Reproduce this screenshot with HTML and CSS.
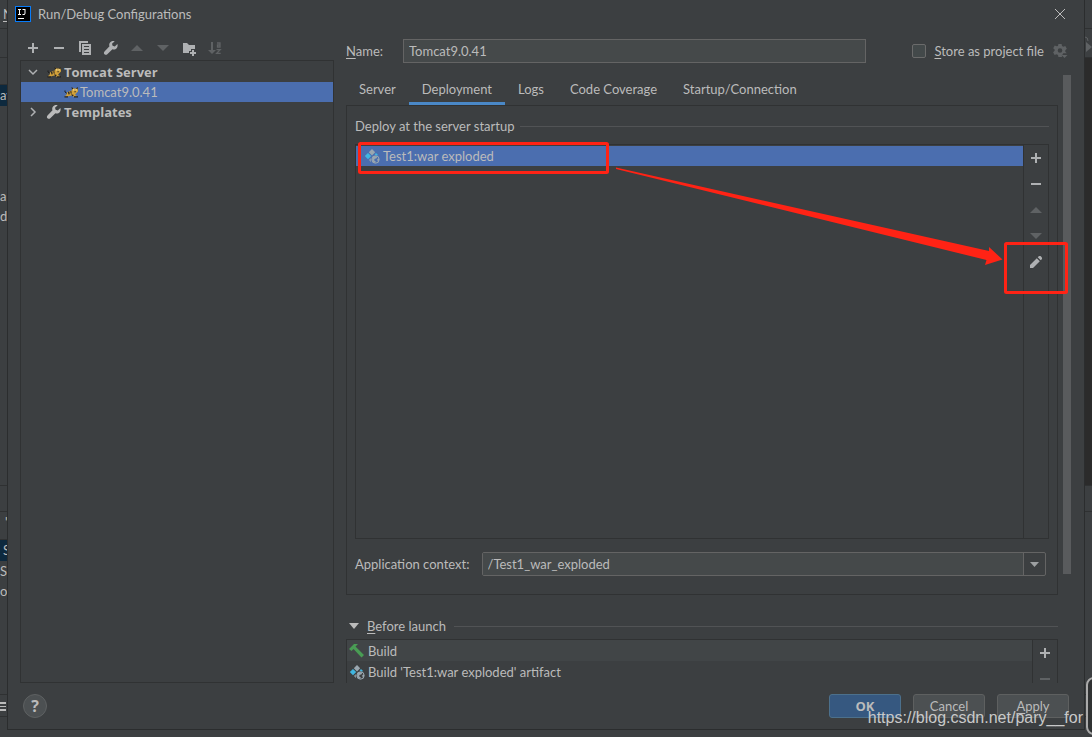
FILE: index.html
```html
<!DOCTYPE html>
<html lang="en">
<head>
<meta charset="utf-8">
<title>Run/Debug Configurations</title>
<link rel="stylesheet" href="styles.css">
</head>
<body>
<svg class="defs" aria-hidden="true">
  <symbol id="plus" viewBox="0 0 16 16"><path fill="currentColor" d="M7 3h2v4h4v2H9v4H7V9H3V7h4z"/></symbol>
  <symbol id="minus" viewBox="0 0 16 16"><path fill="currentColor" d="M3 7h10v2H3z"/></symbol>
  <symbol id="up" viewBox="0 0 16 16"><path fill="currentColor" d="M8 5l6 6H2z"/></symbol>
  <symbol id="down" viewBox="0 0 16 16"><path fill="currentColor" d="M2 5h12l-6 6z"/></symbol>
  <symbol id="wrench" viewBox="0 0 16 16"><path fill="currentColor" d="M14.400 4.100l-2.600 2.300-2.200-.6-.6-2.100 2.700-2.400C9.800.7 7.900 1.300 6.900 2.700c-.8 1.100-.9 2.400-.4 3.600l-5 5.100c-.8.800-.8 2 0 2.800s2 .8 2.800 0l5.100-5c1.500.6 3.200.2 4.300-1 .9-1.100 1.200-2.700.7-4.100z"/></symbol>
  <symbol id="artifact" viewBox="0 0 16 16">
    <path fill="#9aa7b0" d="M8 1l3.200 3.200L8 7.400 4.800 4.200z"/>
    <path fill="#40b6e0" d="M4 4.900l3.200 3.200L4 11.300.8 8.100zM12 5l2 2-1 .8-2.400-1.400z"/>
    <path fill="#9aa7b0" d="M7 10l-2 2 2.200 2.200c-.6-1.500-.6-2.800-.2-4.200z"/>
    <circle cx="11.500" cy="11.500" r="3.700" fill="none" stroke="#9aa7b0" stroke-width="1"/>
    <path fill="#9aa7b0" d="M8.500 9.500l2-1.500 3 .4-1 1.800-2 .7-.3 1.500 1.500.8-.3 1.700-1.900-.7-1.500-2zM13.200 11l1.800-.4v2l-1.300 1.200z"/>
  </symbol>
  <symbol id="tomcat" viewBox="0 0 16 16">
    <path fill="none" stroke="#1e1f20" stroke-width="1" d="M4 9.500L2 8V6.500"/>
    <path fill="#d2a13a" d="M4 8.500l3-1.500 2-.5V3.500l2 1h2l2-1v4l-2 2-1 1.500 2 1v1h-3l-2-1.500L6 12l-2 1H2v-1l1.500-1z"/>
    <path fill="#1e1f20" d="M8.500 3l2 1.200L9 5.500zM15 3l-2 1.200 1.500 1.300zM5 8l1.300-.4.4 2.600-1.200.4zM7.300 7.200l1-.2.400 2.800-1-.2zM1.500 12.300h3.500v1.200H1.500zM11 12.300h4v1.200h-4zM8 10.300l3 .7-1.500 1.300zM11.500 7.300h1.200v1h-1.200z"/>
    <path fill="#f0e0a0" d="M10 5.200h1.300v1.300H10zM12.500 5.200h1.300v1.300h-1.300z"/>
  </symbol>
</svg>

<div class="screen">
  <aside class="behind behind-left" aria-hidden="true">
    <div class="bar menu-bar"><u>N</u></div>
    <div class="bar nav-bar"></div>
    <div class="bar tool-bar"></div>
    <div class="line picked">av</div>
    <div class="code"><div class="line">a</div><div class="line">d</div></div>
    <div class="bar status-bar"></div>
    <div class="bar pane-bar">'</div>
    <div class="line picked end">S</div>
    <div class="line">S</div>
    <div class="line">o</div>
    <div class="rest"></div>
    <div class="bar bottom-bar"><svg viewBox="0 0 8 10"><path fill="#bbb" d="M0 0h6v2H0zM0 4h6v1H0zM0 7h6v2H0z"/></svg></div>
  </aside>

  <main class="dialog">
    <header class="title">
      <svg class="logo" viewBox="0 0 16 16"><path fill="#087cfa" d="M0 0h16v16H0z"/><path fill="#000" d="M1 1h14v14H1z"/><path fill="#fff" d="M3 3h3v1H5v4h1v1H3V8h1V4H3zM7.500 3h3v4.500L9.500 9h-2V8H9l.5-.5V4h-2zM3 12h6v1H3z"/></svg>
      <h1>Run/Debug Configurations</h1>
      <button class="close" aria-label="Close"><svg viewBox="0 0 12 12"><path fill="none" stroke="#bbb" stroke-width="1" d="M1 1l10 10M11 1L1 11"/></svg></button>
    </header>

    <div class="columns">
      <section class="side">
        <div class="tools">
          <button class="icon" aria-label="Add"><svg><use href="#plus"/></svg></button>
          <button class="icon" aria-label="Remove"><svg><use href="#minus"/></svg></button>
          <button class="icon" aria-label="Copy"><svg viewBox="0 0 16 16"><path fill="currentColor" fill-rule="evenodd" d="M2 1h9v2H4v9H2zM5 4h9v11H5zM7 6v1h5V6zM7 9v1h5V9zM7 12v1h5v-1z"/></svg></button>
          <button class="icon" aria-label="Edit templates"><svg><use href="#wrench"/></svg></button>
          <button class="icon dim" aria-label="Move up"><svg><use href="#up"/></svg></button>
          <button class="icon dim" aria-label="Move down"><svg><use href="#down"/></svg></button>
          <button class="icon" aria-label="New folder"><svg viewBox="0 0 16 16"><path fill="currentColor" d="M2 3h4l2 2h6v4h-4v2H8v2H2zM11 10h2v2h2v2h-2v2h-2v-2H9v-2h2z"/></svg></button>
          <button class="icon dim" aria-label="Sort configurations"><svg viewBox="0 0 16 16"><path fill="currentColor" d="M4 2h2v8h3l-4 4-4-4h3z"/><path fill="none" stroke="currentColor" stroke-width="1.300" d="M10 3h3v4h-2.500V5H13M9.500 9.700h3.700l-3.500 3.600h4"/></svg></button>
        </div>
        <ul class="tree">
          <li class="node"><svg class="chevron" viewBox="0 0 10 10"><path d="M1 3l4 4 4-4"/></svg><svg class="glyph"><use href="#tomcat"/></svg><b>Tomcat Server</b></li>
          <li class="node child selected"><svg class="glyph"><use href="#tomcat"/></svg><span>Tomcat9.0.41</span></li>
          <li class="node"><svg class="chevron" viewBox="0 0 10 10"><path d="M3 1l4 4-4 4"/></svg><svg class="glyph"><use href="#wrench"/></svg><b>Templates</b></li>
        </ul>
      </section>

      <section class="editor">
        <div class="name-row">
          <label class="name-label" for="name"><u>N</u>ame:</label>
          <input class="name" id="name" type="text" value="Tomcat9.0.41">
          <div class="store">
            <input class="check" id="store" type="checkbox">
            <label for="store"><u>S</u>tore as project file</label>
            <button class="icon dim" aria-label="Storage options"><svg viewBox="0 0 16 16"><path fill="currentColor" fill-rule="evenodd" d="M6.400 1h3.200l.4 2 1.400.8 1.900-.7 1.500 2.700-1.500 1.400v1.600l1.500 1.400h-3.600l-.9 1.800-.5 2H6.400L6 12l-1.400-.8-2 .7-1.500-2.700 1.500-1.400V6.400L1.200 5.200l1.500-2.600 2 .7L6 2.900zM8 5.200a2.300 2.300 0 100 4.600 2.300 2.300 0 000-4.600zM9.500 12h6l-3 3z"/></svg></button>
          </div>
        </div>

        <div class="scroll-area">
          <div class="scroll-content">
            <nav class="tabs">
              <button class="tab">Server</button>
              <button class="tab active">Deployment</button>
              <button class="tab">Logs</button>
              <button class="tab">Code Coverage</button>
              <button class="tab">Startup/Connection</button>
            </nav>
            <div class="panel">
              <h2 class="rule">Deploy at the server startup</h2>
              <div class="list deploy">
                <ul class="items"><li class="item selected"><svg class="glyph"><use href="#artifact"/></svg>Test1:war exploded</li></ul>
                <div class="actions">
                  <button class="icon" aria-label="Add artifact"><svg><use href="#plus"/></svg></button>
                  <button class="icon" aria-label="Remove artifact"><svg><use href="#minus"/></svg></button>
                  <button class="icon dim" aria-label="Move artifact up"><svg><use href="#up"/></svg></button>
                  <button class="icon dim" aria-label="Move artifact down"><svg><use href="#down"/></svg></button>
                  <button class="icon" aria-label="Edit artifact"><svg viewBox="0 0 16 16"><path fill="currentColor" d="M2 11l6.800-6.800 3 3L5 14H2zM9.700 3.300l1.100-1.100c1.600-1.200 4.200 1.400 3 3l-1.100 1.100z"/></svg></button>
                </div>
              </div>
              <div class="context-row">
                <label for="context">Application context:</label>
                <div class="combo">
                  <select id="context"><option>/Test1_war_exploded</option></select>
                  <svg class="combo-arrow" viewBox="0 0 21 22"><path fill="#9da0a2" d="M6 9h9l-4.500 5z"/></svg>
                </div>
              </div>
            </div>
            <h2 class="rule launch-title"><svg viewBox="0 0 10 6"><path fill="#bbb" d="M0 0h10L5 6z"/></svg><span><u>B</u>efore launch</span></h2>
            <div class="list launch">
              <ul class="items">
                <li class="item striped"><svg class="glyph" viewBox="0 0 16 16"><path fill="#499c54" d="M0 6l5-5h4L6.500 3.500 15 12l-2.500 2.500L4.500 6 2.500 8z"/></svg>Build</li>
                <li class="item"><svg class="glyph"><use href="#artifact"/></svg>Build 'Test1:war exploded' artifact</li>
              </ul>
              <div class="actions">
                <button class="icon" aria-label="Add task"><svg><use href="#plus"/></svg></button>
                <button class="icon dim" aria-label="Remove task"><svg><use href="#minus"/></svg></button>
              </div>
            </div>
          </div>
          <div class="scrollbar"><div class="thumb"></div></div>
        </div>
      </section>
    </div>

    <footer class="buttons">
      <button class="help" aria-label="Help">?</button>
      <button class="push primary">OK</button>
      <button class="push">Cancel</button>
      <button class="push"><u>A</u>pply</button>
    </footer>
  </main>

  <aside class="behind behind-right" aria-hidden="true">
    <div class="bar menu-bar"></div>
    <div class="bar nav-bar"><svg viewBox="0 0 8 20"><path fill="#5f6264" d="M1 7l6 5-6 5z"/><path fill="none" stroke="#5f6264" d="M0 2q3 0 3 4"/></svg></div>
    <div class="code dark"></div>
    <div class="bar status-bar"></div>
    <div class="rest"></div>
    <div class="bar bottom-bar"></div>
  </aside>
</div>
<div class="corner-widget"></div>

<svg class="marks" viewBox="0 0 1092 737" aria-hidden="true">
  <g fill="none" stroke="#ff2315" stroke-width="3">
    <rect x="359.500" y="143.500" width="248" height="29" rx="1"/>
    <rect x="1005.500" y="243.500" width="61" height="49" rx="1"/>
  </g>
  <path fill="#ff2315" d="M616 167.500L989 251V247L1002.500 259.500 985 265l1.500-5L616 169z"/>
</svg>
<p class="watermark">https://blog.csdn.net/pary__for</p>
</body>
</html>
```

FILE: styles.css
```css
* { box-sizing: border-box; }

body {
  margin: 0;
  background: #3c3f41;
  color: #bbbbbb;
  font: 13px/20px Lato, "Noto Sans", sans-serif;
  position: relative;
  overflow: hidden;
}

button, input, select { font: inherit; color: inherit; margin: 0; padding: 0; }
button { background: none; border: 0; }
h1, h2, ul, p { margin: 0; padding: 0; list-style: none; font-size: 13px; font-weight: normal; }
b { font-family: "Open Sans", "Noto Sans", sans-serif; }
u { text-underline-offset: 2px; }
svg { display: block; flex: none; }
.defs { display: none; }

.screen { display: flex; height: 100vh; min-height: 480px; }

/* Main window peeking out behind the dialog */
.behind { width: 7px; flex: none; display: flex; flex-direction: column; overflow: hidden; padding-bottom: 20px; }
.bar { border-bottom: 1px solid #2f3132; flex: none; }
.menu-bar { height: 29px; padding: 4px 0 0 3px; }
.nav-bar { height: 29px; }
.nav-bar svg { width: 8px; height: 20px; margin-top: 6px; }
.tool-bar { height: 27px; }
.line { height: 20px; overflow: hidden; flex: none; }
.picked { background: #0d293e; height: 21px; }
.end { padding-left: 3px; }
.code { flex: 1; padding-top: 80px; }
.dark { background: #2b2b2b; }
.status-bar { height: 27px; border-top: 1px solid #2f3132; }
.pane-bar { height: 28px; padding-left: 5px; }
.behind-left .rest { height: 93px; }
.behind-right .rest { height: 182px; }
.bottom-bar { height: 23px; border-top: 1px solid #2f3132; padding-top: 7px; }
.bottom-bar svg { width: 8px; height: 10px; }

.dialog {
  flex: 1;
  min-width: 0;
  display: flex;
  flex-direction: column;
  margin-bottom: 7px;
  border: solid #2b2d2e;
  border-width: 0 1px 1px;
}

.title { height: 28px; display: flex; align-items: center; padding: 0 18px 0 7px; gap: 7px; }
.logo { width: 16px; height: 16px; }
.title h1 { flex: 1; }
.close svg { width: 12px; height: 12px; }

.columns { flex: 1; min-height: 0; display: flex; gap: 12px; padding: 8px 13px 0 12px; }

.side { width: 314px; flex: none; display: flex; flex-direction: column; }
.tools { height: 24px; display: flex; align-items: center; gap: 10px; padding-left: 5px; }
.icon { width: 16px; height: 16px; color: #afb1b3; flex: none; }
.icon svg { width: 16px; height: 16px; }
.dim { color: #5f6264; }
.tree { flex: 1; border: 1px solid #303233; padding-top: 1px; }
.node { height: 20px; display: flex; align-items: center; gap: 2px; padding-left: 7px; line-height: 18px; padding-bottom: 1px; }
.child { padding-left: 42px; gap: 1px; }
.selected { background: #4b6eaf; }
.chevron { width: 10px; height: 10px; margin-right: 6px; fill: none; stroke: #afb1b3; stroke-width: 1.5; }
.glyph { width: 16px; height: 16px; }

.editor { flex: 1; min-width: 0; display: flex; flex-direction: column; }
.name-row { display: flex; align-items: center; height: 30px; gap: 46px; }
.name-label { width: 57px; margin-right: -46px; }
.name { flex: 1; min-width: 0; height: 24px; padding: 0 5px; background: #45494a; border: 1px solid #646464; }
.store { display: flex; align-items: center; gap: 8px; padding-right: 3px; }
.check { appearance: none; width: 14px; height: 14px; background: #43494a; border: 1px solid #6b6b6b; border-radius: 2px; }

.scroll-area { flex: 1; min-height: 0; display: flex; gap: 5px; padding-top: 9px; }
.scroll-content { flex: 1; min-width: 0; display: flex; flex-direction: column; }
.scrollbar { width: 8px; }
.thumb { height: 82%; background: #595b5d; }

.tabs { display: flex; height: 30px; flex: none; }
.tab { padding: 0 13px; border-bottom: 3px solid transparent; }
.active { border-color: #4a88c7; }

.panel { flex: 1; min-height: 0; display: flex; flex-direction: column; padding: 10px 8px 18px; border: 1px solid #303233; }
.rule { display: flex; align-items: center; gap: 6px; }
.rule::after { content: ""; flex: 1; height: 1px; background: #515355; }
.list { display: flex; border: 1px solid #303233; }
.items { flex: 1; min-width: 0; }
.item { height: 20px; display: flex; align-items: center; gap: 3px; padding-left: 2px; }
.deploy .item { padding-left: 8px; }
.deploy .items { padding-top: 1px; }
.actions { width: 25px; border-left: 1px solid #303233; display: flex; flex-direction: column; align-items: center; gap: 10px; padding-top: 5px; }
.deploy { flex: 1; min-height: 0; margin-top: 8px; }
.context-row { display: flex; align-items: center; gap: 12px; margin-top: 13px; padding-right: 3px; }
.combo { flex: 1; display: flex; height: 24px; border: 1px solid #646464; border-radius: 2px; }
.combo select { flex: 1; appearance: none; background: #45494a; border: 0; border-right: 1px solid #646464; border-radius: 0; padding: 0 5px; }
.combo-arrow { width: 21px; height: 22px; }

.launch-title { margin-top: 21px; padding-left: 3px; gap: 8px; }
.launch-title svg { width: 10px; height: 6px; }
.launch { height: 44px; flex: none; overflow: hidden; margin-top: 3px; border-bottom: 0; }
.launch .item { height: 21px; }
.striped { background: #414547; }

.buttons { display: flex; align-items: center; gap: 12px; height: 46px; flex: none; padding: 0 15px; }
.help { width: 24px; height: 24px; margin-right: auto; border: 1px solid #5e6162; border-radius: 50%; background: #4c5052; font: bold 16px/20px "Open Sans", "Noto Sans", sans-serif; }
.push { width: 72px; height: 24px; border: 1px solid #5e6060; border-radius: 3px; background: #4c5052; }
.primary { background: #365880; border-color: #4c708c; font-family: "Open Sans", "Noto Sans", sans-serif; font-weight: bold; }

.corner-widget { position: absolute; right: -20px; bottom: 2px; width: 26px; height: 58px; border: 2px solid #aaaaaa; border-radius: 8px; background: #303233; }
.marks { position: absolute; top: 0; left: 0; width: 1092px; height: 737px; pointer-events: none; }
.watermark { position: absolute; right: 9px; bottom: 9px; font: 16px/20px "Liberation Sans", Arial, sans-serif; color: #c8c9c9; }
```
